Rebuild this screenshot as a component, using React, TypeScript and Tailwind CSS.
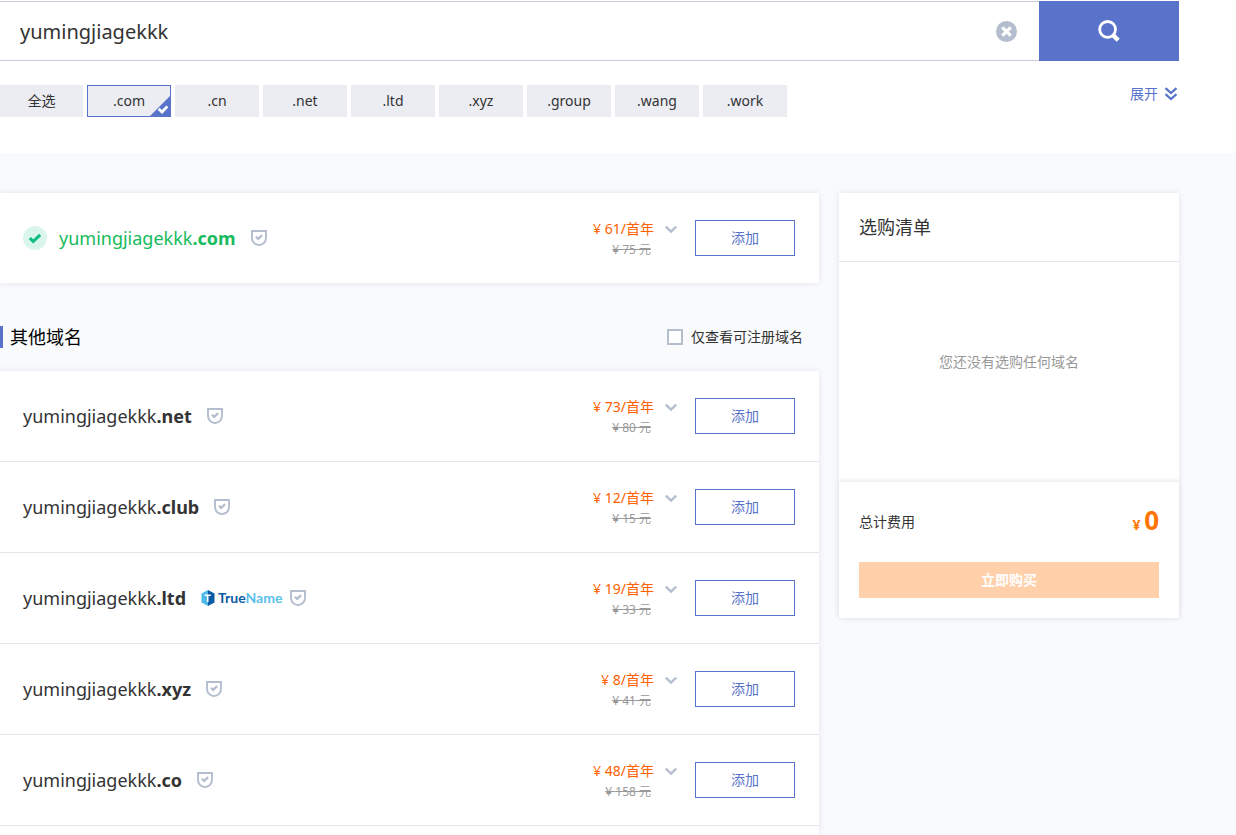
import React, { useState } from "react";

type Domain = {
  name: string;
  suffix: string;
  price: number;
  original: number;
  available?: boolean;
  trueName?: boolean;
};

const keyword = "yumingjiagekkk";

const suffixes = ["全选", ".com", ".cn", ".net", ".ltd", ".xyz", ".group", ".wang", ".work"];

const primary: Domain = { name: keyword, suffix: ".com", price: 61, original: 75, available: true };

const others: Domain[] = [
  { name: keyword, suffix: ".net", price: 73, original: 80 },
  { name: keyword, suffix: ".club", price: 12, original: 15 },
  { name: keyword, suffix: ".ltd", price: 19, original: 33, trueName: true },
  { name: keyword, suffix: ".xyz", price: 8, original: 41 },
  { name: keyword, suffix: ".co", price: 48, original: 158 },
];

function ShieldIcon() {
  return (
    <svg className="h-4 w-4 shrink-0" viewBox="0 0 16 16" fill="none" aria-hidden="true">
      <path d="M1 1h14v6.5c0 4.6-3 7-7 7.600-4-.6-7-3-7-7.600z" stroke="#b4bece" strokeWidth="1.9" />
      <path d="M4.900 6.800l2.300 2.100 3.900-3.800" stroke="#b4bece" strokeWidth="2.2" />
    </svg>
  );
}

function ChevronIcon() {
  return (
    <svg className="h-3 w-3" viewBox="0 0 12 12" fill="none" aria-hidden="true">
      <path d="M0.8 3.600L6 8.600l5.200-5" stroke="#b4bece" strokeWidth="2.4" />
    </svg>
  );
}

function TrueNameLogo() {
  return (
    <span className="flex items-center gap-[3px] font-['Lato','Noto_Sans',sans-serif] text-sm font-bold leading-4 text-[#0a5ba3]">
      <svg className="h-4 w-3.5" viewBox="0 0 14 16" aria-hidden="true">
        <path d="M7 0L0.5 3.6v8.8L7 16z" fill="#4db9e8" />
        <path d="M7 0l6.5 3.6v8.8L7 16z" fill="#0a5ba3" />
        <path d="M3.6 4.600h6.200v1.500H7.500v6H5.900v-6H3.600z" fill="#fff" />
      </svg>
      <span>
        True<span className="text-[#5cc0ea]">Name</span>
      </span>
    </span>
  );
}

function DomainRow({ domain }: { domain: Domain }) {
  return (
    <div className="flex h-[90px] items-center pl-[23px] pr-6">
      {domain.available && (
        <svg className="mr-3 h-6 w-6" viewBox="0 0 24 24" aria-hidden="true">
          <circle cx="12" cy="12" r="12" fill="#daf5eb" />
          <path d="M6.8 12.2l3.4 3.2 7-6.6" fill="none" stroke="#0fbd83" strokeWidth="3" />
        </svg>
      )}
      <div className="flex flex-1 items-center gap-[15px]">
        <span className={domain.available ? "text-lg text-[#15bb5c]" : "text-lg text-[#333]"}>
          {domain.name}
          <b>{domain.suffix}</b>
        </span>
        <span className="flex items-center gap-2">
          {domain.trueName && <TrueNameLogo />}
          <ShieldIcon />
        </span>
      </div>
      <div className="mr-[18px] grid grid-cols-[auto_12px] items-center gap-x-[11px] gap-y-px pt-0.5">
        <span className="text-right text-sm leading-5 text-[#ff6000]">¥ {domain.price}/首年</span>
        <button type="button" aria-label="价格详情" className="flex">
          <ChevronIcon />
        </button>
        <del className="pr-[3px] text-right text-xs leading-5 text-[#999]">¥ {domain.original} 元</del>
      </div>
      <button type="button" className="h-9 w-[100px] border border-[#5873c9] text-sm text-[#5873c9]">
        添加
      </button>
    </div>
  );
}

export default function App() {
  const [query, setQuery] = useState(keyword);
  const [onlyAvailable, setOnlyAvailable] = useState(false);

  return (
    <div className="flex h-screen flex-col overflow-hidden bg-[#f9fafc] font-['Noto_Sans','Noto_Sans_CJK_SC',sans-serif] text-[#333]">
      <header className="bg-white pb-9 pr-[57px] pt-px">
        <form className="flex h-[60px]" onSubmit={(e) => e.preventDefault()}>
          <div className="flex flex-1 items-center border-y border-[#c9cce0] pr-[22px]">
            <input
              type="text"
              aria-label="域名"
              value={query}
              onChange={(e) => setQuery(e.target.value)}
              className="h-full flex-1 pl-5 text-xl outline-none"
            />
            <button type="button" aria-label="清除" onClick={() => setQuery("")}>
              <svg className="h-[21px] w-[21px]" viewBox="0 0 21 21" aria-hidden="true">
                <circle cx="10.5" cy="10.5" r="10.5" fill="#b4bece" />
                <path d="M6.3 6.3l8.4 8.4M14.7 6.3l-8.4 8.4" stroke="#fff" strokeWidth="3.2" />
              </svg>
            </button>
          </div>
          <button type="submit" aria-label="搜索" className="flex w-[140px] items-center justify-center bg-[#5873c9]">
            <svg className="h-[22px] w-[22px]" viewBox="0 0 22 22" fill="none" aria-hidden="true">
              <circle cx="9.6" cy="9.4" r="7.9" stroke="#fff" strokeWidth="2.8" />
              <path d="M14.6 14.600l5.600 5.600" stroke="#fff" strokeWidth="4.4" />
            </svg>
          </button>
        </form>
        <div className="mt-6 flex items-start justify-between">
          <div className="flex gap-1">
            {suffixes.map((s, i) => (
              <button
                key={s}
                type="button"
                className={
                  s === ".com"
                    ? "relative h-8 w-[84px] border border-[#5873c9] bg-[#ecedf3] text-sm"
                    : i === 0
                      ? "h-8 w-[83px] bg-[#ecedf3] text-sm"
                      : "h-8 w-[84px] bg-[#ecedf3] text-sm"
                }
              >
                {s}
                {s === ".com" && (
                  <svg className="absolute bottom-0 right-0 h-5 w-5" viewBox="0 0 20 20" aria-hidden="true">
                    <path d="M20 0v20H0z" fill="#5873c9" />
                    <path d="M8.6 12.800l3.400 3.200 5.400-5.600" fill="none" stroke="#fff" strokeWidth="2.8" />
                  </svg>
                )}
              </button>
            ))}
          </div>
          <button type="button" className="flex items-center gap-1.5 pr-px text-sm leading-[18px] text-[#5873c9]">
            展开
            <svg className="h-3.5 w-3.5" viewBox="0 0 14 14" fill="none" stroke="#5873c9" strokeWidth="2.2" aria-hidden="true">
              <path d="M1.5 1.2L7 6l5.500-4.800M1.500 7.200L7 12l5.500-4.800" />
            </svg>
          </button>
        </div>
      </header>

      <div className="flex flex-1 gap-5 pr-[57px] pt-10">
        <main className="flex flex-1 flex-col">
          <section className="bg-white shadow-[0_0_6px_#dfe4ef]">
            <DomainRow domain={primary} />
          </section>

          <div className="flex h-[88px] items-center justify-between pr-4 pt-5">
            <h2 className="border-l-[3px] border-[#5873c9] pl-[7px] text-lg leading-[22px] text-black">其他域名</h2>
            <label className="flex items-center gap-2 text-sm">
              <input
                type="checkbox"
                checked={onlyAvailable}
                onChange={(e) => setOnlyAvailable(e.target.checked)}
                className="h-4 w-4 appearance-none border-2 border-[#b4bece] bg-white checked:bg-[#5873c9]"
              />
              仅查看可注册域名
            </label>
          </div>

          <ul className="flex-1 bg-white shadow-[0_0_6px_#dfe4ef]">
            {others.map((d) => (
              <li key={d.suffix} className="border-b border-[#e3e5e8]">
                <DomainRow domain={d} />
              </li>
            ))}
          </ul>
        </main>

        <aside className="w-[340px] self-start bg-white shadow-[0_0_6px_#dfe4ef]">
          <h2 className="border-b border-[#e3e5e8] px-5 text-lg leading-[68px]">选购清单</h2>
          <p className="flex h-[220px] items-center justify-center pb-5 text-sm text-[#999]">您还没有选购任何域名</p>
          <div className="p-5 shadow-[0_-1px_4px_#e3e3e3]">
            <div className="flex h-10 items-center justify-between">
              <span className="text-sm">总计费用</span>
              <strong className="pb-1 text-sm text-[#ff7300]">
                ¥ <span className="text-[26px] leading-9">0</span>
              </strong>
            </div>
            <button type="button" className="mt-5 h-9 w-full bg-[#ffd0aa] text-sm font-bold text-white">
              立即购买
            </button>
          </div>
        </aside>
      </div>
    </div>
  );
}
